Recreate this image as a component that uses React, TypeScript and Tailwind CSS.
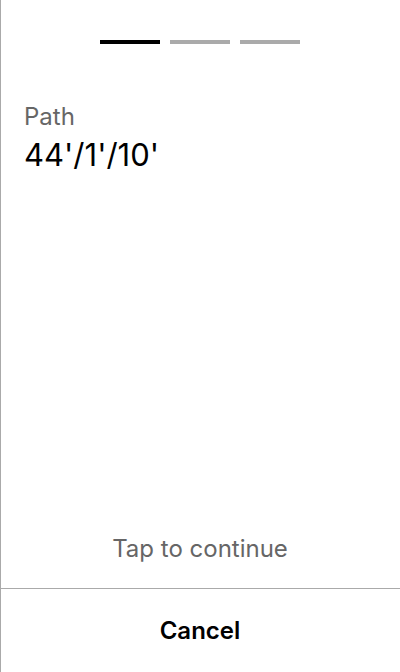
import React from "react";

export default function App() {
  return (
    <div className="w-[400px] h-[672px] bg-white shadow-[inset_1px_0_0_#aaaaaa] flex flex-col" style={{ fontFamily: "Inter, sans-serif" }}>
      <div className="flex justify-center gap-[10px] pt-[40px]">
        <div className="w-[60px] h-[4px] bg-black" />
        <div className="w-[60px] h-[4px] bg-[#aaaaaa]" />
        <div className="w-[60px] h-[4px] bg-[#aaaaaa]" />
      </div>
      <div className="px-[24px] pt-[57px]">
        <div className="text-[24px] leading-[32px] text-[#666666]">Path</div>
        <div className="text-[31px] leading-[36px] text-black mt-[4px]">44'/1'/10'</div>
      </div>
      <div className="flex-1" />
      <div className="text-center text-[24px] leading-[32px] text-[#666666] pb-[23px]">Tap to continue</div>
      <div className="border-t border-[#aaaaaa] h-[84px] flex items-center justify-center">
        <span className="text-[24px] leading-[32px] font-semibold text-black">Cancel</span>
      </div>
    </div>
  );
}
